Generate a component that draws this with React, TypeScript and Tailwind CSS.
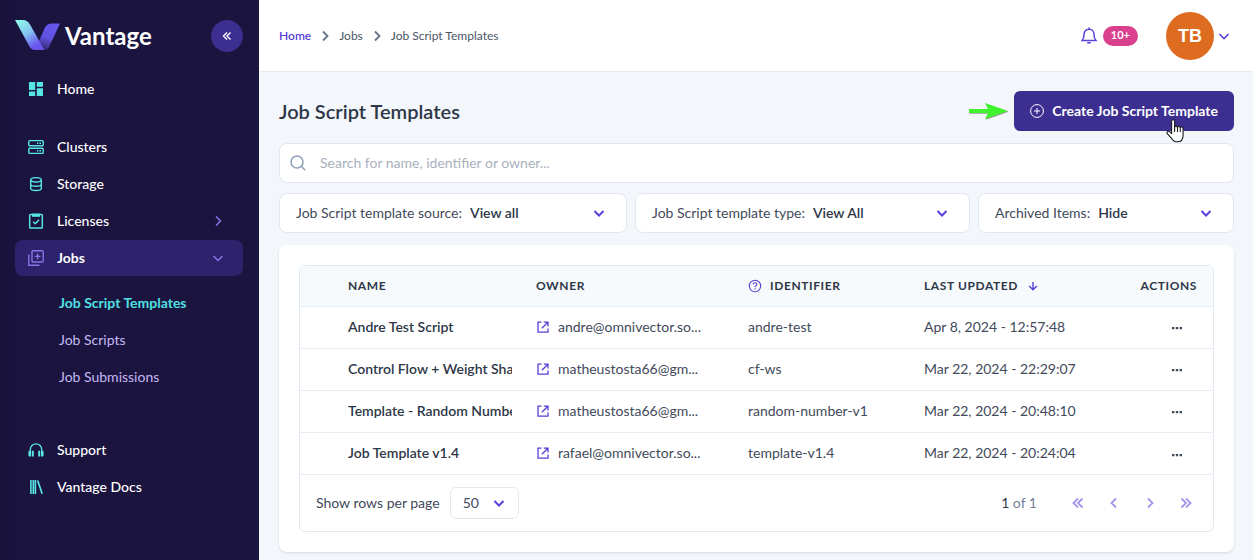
import React from "react";

type IconProps = { className?: string };

function Chevron({ className = "", d = "M3 6l5 5 5-5", w = 2 }: IconProps & { d?: string; w?: number }) {
  return (
    <svg aria-hidden="true" viewBox="0 0 16 16" className={`size-4 shrink-0 ${className}`} fill="none" stroke="currentColor" strokeWidth={w}>
      <path d={d} />
    </svg>
  );
}

function DashboardIcon() {
  return (
    <svg aria-hidden="true" viewBox="0 0 16 16" className="size-4 fill-[#57e6e6]">
      <path d="M1 1h6.2v8H1zM1 10.4h6.2V15H1zM8.8 1H15v4.8H8.8zM8.8 7.2H15V15H8.8z" />
    </svg>
  );
}

function ClustersIcon() {
  return (
    <svg aria-hidden="true" viewBox="0 0 16 16" className="size-4" fill="none" stroke="#57e6e6" strokeWidth="1.4">
      <rect x=".8" y="1.6" width="14.4" height="5.2" rx="1" />
      <rect x=".8" y="9.2" width="14.4" height="5.2" rx="1" />
      <path d="M9 4.200h1.300M11.400 4.200h1.600M9 11.800h1.300M11.400 11.800h1.600" strokeWidth="1.500" />
    </svg>
  );
}

function StorageIcon() {
  return (
    <svg aria-hidden="true" viewBox="0 0 16 16" className="size-4" fill="none" stroke="#57e6e6" strokeWidth="1.4">
      <ellipse cx="8" cy="3.800" rx="5.300" ry="2.200" />
      <path d="M2.700 3.800v8.400c0 1.300 2.300 2.300 5.300 2.300s5.300-1 5.300-2.300V3.800M2.700 8c0 1.300 2.300 2.300 5.300 2.300s5.300-1 5.300-2.300" />
    </svg>
  );
}

function LicensesIcon() {
  return (
    <svg aria-hidden="true" viewBox="0 0 16 16" className="size-4" fill="none" stroke="#57e6e6" strokeWidth="1.500">
      <rect x="1.700" y="1.600" width="12.600" height="13.400" rx=".8" />
      <path d="M4 0.600h8v3.200H4z" fill="#57e6e6" stroke="none" />
      <path d="M5.200 8.700l2 2 3.800-3.800" />
    </svg>
  );
}

function JobsIcon() {
  return (
    <svg aria-hidden="true" viewBox="0 0 16 16" className="size-4" fill="none" stroke="#8b73e8" strokeWidth="1.400">
      <rect x="4" y=".8" width="11.200" height="11.200" rx="1" />
      <path d="M.8 4.600v10.600h10.600M9.600 3.600v5.600M6.800 6.400h5.600" />
    </svg>
  );
}

function SupportIcon() {
  return (
    <svg aria-hidden="true" viewBox="0 0 16 16" className="size-4" fill="none" stroke="#57e6e6" strokeWidth="1.400">
      <path d="M2.300 9.500V7.600a5.700 5.700 0 0111.400 0v1.900" />
      <path d="M.4 10q0-1.200 1.200-1.200H3v5.600H1.600Q.4 14.400.4 13.200zM3.800 8.800h2v5.600h-2zM10.200 8.800h2v5.600h-2zM13 8.800h1.400q1.200 0 1.200 1.200v3.200q0 1.200-1.200 1.200H13z" fill="#57e6e6" stroke="none" />
    </svg>
  );
}

function DocsIcon() {
  return (
    <svg aria-hidden="true" viewBox="0 0 16 16" className="size-4" fill="none" stroke="#57e6e6">
      <path d="M2.900 1v14M5.300 1v14M7.400 1v14" strokeWidth="1.600" />
      <path d="M9.600 1.500l4.600 13.200" strokeWidth="1.700" />
    </svg>
  );
}

function Logo() {
  return (
    <svg aria-hidden="true" viewBox="0 0 46 31" className="h-[31px] w-[46px]">
      <defs>
        <linearGradient id="left" x1="0.100" y1="0" x2=".8" y2="1">
          <stop offset="0" stopColor="#8ffbe9" />
          <stop offset=".45" stopColor="#84c3f0" />
          <stop offset=".85" stopColor="#6a55ee" />
        </linearGradient>
        <linearGradient id="right" x1=".7" y1="0" x2=".4" y2="1">
          <stop offset="0" stopColor="#6757f0" />
          <stop offset=".55" stopColor="#6152e0" />
          <stop offset="1" stopColor="#33286f" />
        </linearGradient>
      </defs>
      <path d="M45 3.500H37q-5 0-7 4L20 30h9.500q3 0 4.500-3z" fill="url(#right)" />
      <path d="M0 0h8q4.500 0 7 4.500L26 24q2.500 5 3.500 6H20q-3.500 0-5.500-3.500z" fill="url(#left)" />
    </svg>
  );
}

function NavItem({ icon, label, trailing, active = false }: { icon: React.ReactNode; label: string; trailing?: string; active?: boolean }) {
  return (
    <a
      href="#"
      className={`flex h-9 items-center rounded-lg pl-[13px] pr-[17px] text-sm text-white ${active ? "bg-[#2d226b] font-bold" : "font-medium"}`}
    >
      <span className="mr-[13px]">{icon}</span>
      <span className="flex-1">{label}</span>
      {trailing && <Chevron d={trailing} w={1.5} className="text-[#8b73e8]" />}
    </a>
  );
}

const DOWN = "M3.500 6l4.500 4.500L12.500 6";
const RIGHT = "M6 3.500l4.500 4.500L6 12.500";
const LEFT = "M10 3.500L5.500 8l4.500 4.500";

function Sidebar() {
  return (
    <aside className="flex w-[259px] shrink-0 flex-col bg-linear-to-r from-[#18113a] to-[#1b143f] to-10% pl-[15px] pr-4">
      <div className="flex h-[71px] items-center justify-between">
        <a href="#" className="flex items-center gap-1 text-2xl font-bold text-white">
          <Logo />
          <span>Vantage</span>
        </a>
        <button aria-label="Collapse menu" className="flex size-8 items-center justify-center rounded-full bg-[#3d2f8f] text-white">
          <Chevron d="M8 4.500L4.500 8 8 11.500M11.500 4.500L8 8l3.500 3.500" w={1.4} />
        </button>
      </div>
      <nav className="flex flex-col gap-px">
        <NavItem icon={<DashboardIcon />} label="Home" />
        <div className="h-5" />
        <NavItem icon={<ClustersIcon />} label="Clusters" />
        <NavItem icon={<StorageIcon />} label="Storage" />
        <NavItem icon={<LicensesIcon />} label="Licenses" trailing={RIGHT} />
        <NavItem icon={<JobsIcon />} label="Jobs" trailing={DOWN} active />
        <div className="mt-2 mb-9 flex flex-col gap-px pl-11 text-sm text-[#c5b9f5]">
          <a href="#" className="flex h-9 items-center font-bold text-[#4fe0e2]">Job Script Templates</a>
          <a href="#" className="flex h-9 items-center">Job Scripts</a>
          <a href="#" className="flex h-9 items-center">Job Submissions</a>
        </div>
        <NavItem icon={<SupportIcon />} label="Support" />
        <NavItem icon={<DocsIcon />} label="Vantage Docs" />
      </nav>
    </aside>
  );
}

function TopBar() {
  return (
    <header className="flex h-[72px] items-center justify-between border-b border-[#e6eaf0] bg-white pl-5 pr-[21px]">
      <nav aria-label="Breadcrumb" className="flex items-center gap-1.5 text-xs text-[#4a5568]">
        <a href="#" className="font-semibold text-[#5a3fd8]">Home</a>
        <Chevron d={RIGHT} w={1.8} className="text-[#64748b]" />
        <a href="#">Jobs</a>
        <Chevron d={RIGHT} w={1.8} className="text-[#64748b]" />
        <span>Job Script Templates</span>
      </nav>
      <div className="flex items-center">
        <button aria-label="Notifications" className="flex items-center gap-1.5 text-[#5a3fd8]">
          <svg aria-hidden="true" viewBox="0 0 16 17" className="h-[17px] w-4" fill="none" stroke="currentColor" strokeWidth="1.500">
            <path d="M1 13.500c1.500-1.500 2-2.500 2-6C3 4.500 5 2.300 8 2.300s5 2.200 5 5.200c0 3.500.5 4.500 2 6zM8 2.300V.5M6.200 15.800h3.600" />
          </svg>
          <span className="flex h-5 items-center rounded-full bg-[#d9408d] px-2 text-[11px] font-bold text-white">10+</span>
        </button>
        <button aria-label="Account menu" className="ml-7 flex items-center gap-0.5 text-[#5a3fd8]">
          <span className="flex size-12 items-center justify-center rounded-full bg-[#dd6b20] font-['Liberation_Sans',sans-serif] text-lg font-bold text-white">TB</span>
          <Chevron d={DOWN} w={1.6} />
        </button>
      </div>
    </header>
  );
}

function Filter({ label, value }: { label: string; value: string }) {
  return (
    <label className="flex h-10 items-center rounded-lg border border-[#e2e8f0] bg-white pl-4 pr-[19px] text-sm text-[#3f4a5a]">
      <span className="whitespace-nowrap">{label}</span>
      <select className="ml-2 min-w-0 flex-1 appearance-none bg-transparent font-semibold text-[#2d3748]">
        <option>{value}</option>
      </select>
      <Chevron d={DOWN} className="text-[#5a3fd8]" />
    </label>
  );
}

const ROWS = [
  { name: "Andre Test Script", owner: "andre@omnivector.so...", id: "andre-test", updated: "Apr 8, 2024 - 12:57:48" },
  { name: "Control Flow + Weight Sharing", owner: "matheustosta66@gm...", id: "cf-ws", updated: "Mar 22, 2024 - 22:29:07" },
  { name: "Template - Random Number", owner: "matheustosta66@gm...", id: "random-number-v1", updated: "Mar 22, 2024 - 20:48:10" },
  { name: "Job Template v1.4", owner: "rafael@omnivector.so...", id: "template-v1.4", updated: "Mar 22, 2024 - 20:24:04" },
];

function ExternalIcon() {
  return (
    <svg aria-hidden="true" viewBox="0 0 12 12" className="size-3 shrink-0" fill="none" stroke="#5a3fd8" strokeWidth="1.300">
      <path d="M4.500 1.200H1v10h10V7.500M6.800 1.200h4.200v4.200M11 1.200L4.800 7.200" />
    </svg>
  );
}

function TemplatesTable() {
  return (
    <table className="w-full table-fixed text-left text-sm text-[#3f4a5a]">
      <colgroup>
        <col className="w-9" />
        <col className="w-[188px]" />
        <col className="w-[212px]" />
        <col className="w-44" />
        <col />
        <col className="w-[100px]" />
      </colgroup>
      <thead className="bg-[#f7fafc] text-xs text-[#2d3748]">
        <tr className="h-10 tracking-wider">
          <td />
          <th className="px-3">NAME</th>
          <th className="px-3">OWNER</th>
          <th className="px-3">
            <span className="flex items-center gap-2">
              <svg aria-hidden="true" viewBox="0 0 14 14" className="size-3.5" fill="none" stroke="#5a3fd8" strokeWidth="1.100">
                <circle cx="7" cy="7" r="5.700" />
                <path d="M5.200 5.600q0-1.800 1.800-1.800t1.800 1.600q0 .9-.9 1.400T7 8.200M7 9.200v1.200" />
              </svg>
              IDENTIFIER
            </span>
          </th>
          <th className="px-3">
            <span className="flex items-center gap-2.5">
              LAST UPDATED
              <svg aria-hidden="true" viewBox="0 0 10 10" className="size-2.5" fill="none" stroke="#5a3fd8" strokeWidth="1.400">
                <path d="M5 1v7.500M1.200 5L5 8.700 8.800 5" />
              </svg>
            </span>
          </th>
          <th className="pr-4 text-right">ACTIONS</th>
        </tr>
      </thead>
      <tbody>
        {ROWS.map((r) => (
          <tr key={r.name} className="h-[42px] border-t border-[#e8eef5]">
            <td />
            <td className="px-3">
              <div className="overflow-hidden font-semibold whitespace-nowrap text-[#2d3748]">{r.name}</div>
            </td>
            <td className="px-3">
              <a href="#" className="flex items-center gap-[9px] pl-px whitespace-nowrap">
                <ExternalIcon />
                {r.owner}
              </a>
            </td>
            <td className="px-3 whitespace-nowrap">{r.id}</td>
            <td className="px-3 whitespace-nowrap">{r.updated}</td>
            <td className="pr-[31px] text-right">
              <button aria-label={`Actions for ${r.name}`} className="inline-flex h-4 items-center align-middle">
                <svg aria-hidden="true" viewBox="0 0 10 4" className="h-1 w-2.5 fill-[#3f4a5a]">
                  <path d="M0 1h2.400v2.200H0zM3.800 1h2.400v2.200H3.800zM7.600 1H10v2.200H7.600z" />
                </svg>
              </button>
            </td>
          </tr>
        ))}
      </tbody>
    </table>
  );
}

const PAGES = [
  { label: "First page", d: "M8 3.500L3.500 8 8 12.500M12.500 3.500L8 8l4.500 4.500" },
  { label: "Previous page", d: LEFT },
  { label: "Next page", d: RIGHT },
  { label: "Last page", d: "M3.500 3.500L8 8l-4.500 4.500M8 3.500L12.500 8 8 12.500" },
];

function TableFooter() {
  return (
    <div className="flex h-[57px] items-center justify-between border-t border-[#e8eef5] pl-4 pr-[19px] text-sm text-[#3f4a5a]">
      <div className="flex items-center gap-2.5">
        <label htmlFor="rows">Show rows per page</label>
        <div className="flex h-8 items-center rounded-md border border-[#e2e8f0] pl-3 pr-[11px]">
          <select id="rows" className="w-7 appearance-none bg-transparent">
            <option>50</option>
          </select>
          <Chevron d={DOWN} className="text-[#5a3fd8]" />
        </div>
      </div>
      <div className="flex items-center">
        <span className="mr-[33px] text-[#718096]">
          <span className="text-[#2d3748]">1</span> of 1
        </span>
        <div className="flex items-center gap-5 text-[#a694ec]">
          {PAGES.map((p) => (
            <button key={p.label} aria-label={p.label}>
              <Chevron d={p.d} w={1.800} />
            </button>
          ))}
        </div>
      </div>
    </div>
  );
}

function PointerHand() {
  return (
    <svg aria-hidden="true" viewBox="0 0 18 24" className="absolute top-7 right-[50px] h-6 w-[18px]" fill="#fff" stroke="#1a1a1a" strokeWidth="1.100" strokeLinejoin="round">
      <path d="M5.600 14.500V2.400q0-1.700 1.500-1.700t1.500 1.700v6.200q0-1.500 1.400-1.500t1.500 1.700q0-1.300 1.400-1.300t1.400 1.700q0-1.200 1.300-1.200 1.500 0 1.500 2v6.200q0 6.600-5.700 6.600-4 0-5.800-3.400L1.300 14.700q-.9-1.800.5-2.300 1.300-.4 2.500 1z" />
      <path d="M8.600 8.600v4.400M11.500 8.800V13M14.300 9.500V13" fill="none" />
    </svg>
  );
}

export default function App() {
  return (
    <div className="flex min-h-screen bg-[#f3f6fb] font-['Lato','Noto_Sans',sans-serif]">
      <Sidebar />
      <div className="flex min-w-0 flex-1 flex-col">
        <TopBar />
        <main className="flex flex-col pt-[19px] pr-[19px] pb-2 pl-5">
          <div className="flex items-center justify-between">
            <h1 className="text-xl font-semibold text-[#2d3748]">Job Script Templates</h1>
            <div className="flex items-center gap-1">
              <svg aria-hidden="true" viewBox="0 0 42 18" className="h-[18px] w-[42px]">
                <path d="M1 7h19L17 1l23 8-23 8 3-6H1z" fill="#999" transform="translate(.8 .8)" />
                <path d="M1 7h19L17 1l23 8-23 8 3-6H1z" fill="#41f22e" />
              </svg>
              <button className="relative flex h-10 items-center gap-2 rounded-md bg-[#3d2f92] px-4 text-sm font-bold text-white">
                <svg aria-hidden="true" viewBox="0 0 14 14" className="size-3.5" fill="none" stroke="currentColor">
                  <circle cx="7" cy="7" r="6.400" />
                  <path d="M7 4v6M4 7h6" />
                </svg>
                Create Job Script Template
                <PointerHand />
              </button>
            </div>
          </div>
          <label className="mt-3 flex h-10 items-center gap-3.5 rounded-lg border border-[#e2e8f0] bg-white px-2.5">
            <svg aria-hidden="true" viewBox="0 0 16 16" className="size-4" fill="none" stroke="#8f9fb8" strokeWidth="1.500">
              <circle cx="7" cy="7" r="6" />
              <path d="M11.200 11.200l4 4" />
            </svg>
            <input aria-label="Search" placeholder="Search for name, identifier or owner..." className="flex-1 text-sm outline-none placeholder:text-[#a9b1bd]" />
          </label>
          <div className="mt-2.5 grid grid-cols-[348fr_335fr_256fr] gap-2">
            <Filter label="Job Script template source:" value="View all" />
            <Filter label="Job Script template type:" value="View All" />
            <Filter label="Archived Items:" value="Hide" />
          </div>
          <section className="mt-3 rounded-lg bg-white p-5 shadow">
            <div className="overflow-hidden rounded-md border border-[#e2e8f0]">
              <TemplatesTable />
              <TableFooter />
            </div>
          </section>
        </main>
      </div>
    </div>
  );
}
